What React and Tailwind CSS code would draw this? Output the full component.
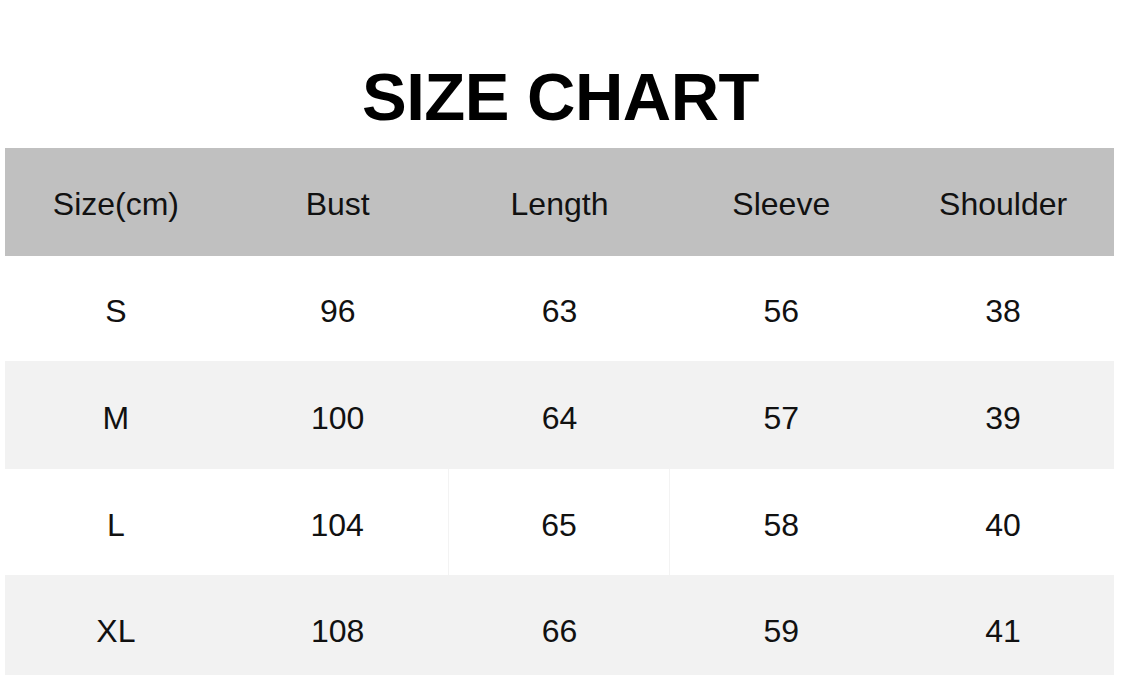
export default function App() {
  const header = ["Size(cm)", "Bust", "Length", "Sleeve", "Shoulder"];
  const rows = [
    { cells: ["S", "96", "63", "56", "38"], bg: "bg-white", h: "h-[105px]" },
    { cells: ["M", "100", "64", "57", "39"], bg: "bg-[#f2f2f2]", h: "h-[108px]" },
    { cells: ["L", "104", "65", "58", "40"], bg: "bg-white", h: "h-[106px]", lines: true },
    { cells: ["XL", "108", "66", "59", "41"], bg: "bg-[#f2f2f2]", h: "h-[106px]" },
  ];
  return (
    <div className="w-[1121px] h-[675px] overflow-hidden bg-white text-[#111] font-['Liberation_Sans',Arial,sans-serif]">
      <div className="h-[148px] flex items-end justify-center pb-[18px]">
        <h1 className="text-[67px] font-bold leading-none tracking-[-0.5px] text-black">SIZE CHART</h1>
      </div>
      <div className="ml-[5px] w-[1109px]">
        <div className="grid grid-cols-5 h-[108px] bg-[#c0c0c0]">
          {header.map((t) => (
            <div key={t} className="flex items-center justify-center pt-[4px] text-[32px]">
              {t}
            </div>
          ))}
        </div>
        {rows.map((r, i) => (
          <div key={i} className={`grid grid-cols-5 ${r.h} ${r.bg}`}>
            {r.cells.map((c, j) => (
              <div
                key={j}
                className={`flex items-center justify-center pt-[5px] text-[32px] ${
                  r.lines && (j === 1 || j === 2) ? "border-r border-[#f3f3f3]" : ""
                }`}
              >
                {c}
              </div>
            ))}
          </div>
        ))}
      </div>
    </div>
  );
}
